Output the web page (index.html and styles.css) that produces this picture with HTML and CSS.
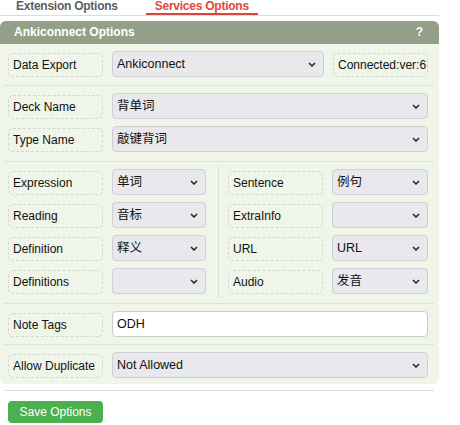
FILE: index.html
```html
<!DOCTYPE html>
<html>
<head>
<meta charset="utf-8">
<link rel="stylesheet" href="styles.css">
</head>
<body>
<div class="page">
  <div class="tabs">
    <span class="tab">Extension Options</span>
    <span class="tab active">Services Options</span>
  </div>

  <div class="panel">
    <div class="panel-head"><span>Ankiconnect Options</span><span>?</span></div>

    <div class="sec s1">
      <div class="row">
        <div class="lbl">Data Export</div>
        <div class="sel">
          <select><option>Ankiconnect</option></select>
          <svg class="chev" width="8" height="5" viewBox="0 0 8 5"><path d="M1 1 L4 4 L7 1" fill="none" stroke="#222" stroke-width="1.5"/></svg>
        </div>
        <div class="lbl status">Connected:ver:6</div>
      </div>
    </div>

    <div class="sec s2">
      <div class="row">
        <div class="lbl">Deck Name</div>
        <div class="sel">
          <select><option>背单词</option></select>
          <svg class="chev" width="8" height="5" viewBox="0 0 8 5"><path d="M1 1 L4 4 L7 1" fill="none" stroke="#222" stroke-width="1.5"/></svg>
        </div>
      </div>
      <div class="row">
        <div class="lbl">Type Name</div>
        <div class="sel">
          <select><option>敲键背词</option></select>
          <svg class="chev" width="8" height="5" viewBox="0 0 8 5"><path d="M1 1 L4 4 L7 1" fill="none" stroke="#222" stroke-width="1.5"/></svg>
        </div>
      </div>
    </div>

    <div class="sec s3">
      <div class="cols">
        <div class="col left">
          <div class="row">
            <div class="lbl">Expression</div>
            <div class="sel">
              <select><option>单词</option></select>
              <svg class="chev" width="8" height="5" viewBox="0 0 8 5"><path d="M1 1 L4 4 L7 1" fill="none" stroke="#222" stroke-width="1.5"/></svg>
            </div>
          </div>
          <div class="row">
            <div class="lbl">Reading</div>
            <div class="sel">
              <select><option>音标</option></select>
              <svg class="chev" width="8" height="5" viewBox="0 0 8 5"><path d="M1 1 L4 4 L7 1" fill="none" stroke="#222" stroke-width="1.5"/></svg>
            </div>
          </div>
          <div class="row">
            <div class="lbl">Definition</div>
            <div class="sel">
              <select><option>释义</option></select>
              <svg class="chev" width="8" height="5" viewBox="0 0 8 5"><path d="M1 1 L4 4 L7 1" fill="none" stroke="#222" stroke-width="1.5"/></svg>
            </div>
          </div>
          <div class="row">
            <div class="lbl">Definitions</div>
            <div class="sel">
              <select><option></option></select>
              <svg class="chev" width="8" height="5" viewBox="0 0 8 5"><path d="M1 1 L4 4 L7 1" fill="none" stroke="#222" stroke-width="1.5"/></svg>
            </div>
          </div>
        </div>
        <div class="col right">
          <div class="row">
            <div class="lbl">Sentence</div>
            <div class="sel">
              <select><option>例句</option></select>
              <svg class="chev" width="8" height="5" viewBox="0 0 8 5"><path d="M1 1 L4 4 L7 1" fill="none" stroke="#222" stroke-width="1.5"/></svg>
            </div>
          </div>
          <div class="row">
            <div class="lbl">ExtraInfo</div>
            <div class="sel">
              <select><option></option></select>
              <svg class="chev" width="8" height="5" viewBox="0 0 8 5"><path d="M1 1 L4 4 L7 1" fill="none" stroke="#222" stroke-width="1.5"/></svg>
            </div>
          </div>
          <div class="row">
            <div class="lbl">URL</div>
            <div class="sel">
              <select><option>URL</option></select>
              <svg class="chev" width="8" height="5" viewBox="0 0 8 5"><path d="M1 1 L4 4 L7 1" fill="none" stroke="#222" stroke-width="1.5"/></svg>
            </div>
          </div>
          <div class="row">
            <div class="lbl">Audio</div>
            <div class="sel">
              <select><option>发音</option></select>
              <svg class="chev" width="8" height="5" viewBox="0 0 8 5"><path d="M1 1 L4 4 L7 1" fill="none" stroke="#222" stroke-width="1.5"/></svg>
            </div>
          </div>
        </div>
      </div>
    </div>

    <div class="sec s4">
      <div class="row">
        <div class="lbl">Note Tags</div>
        <input class="txt" type="text" value="ODH">
      </div>
    </div>

    <div class="sec s5">
      <div class="row">
        <div class="lbl">Allow Duplicate</div>
        <div class="sel">
          <select><option>Not Allowed</option></select>
          <svg class="chev" width="8" height="5" viewBox="0 0 8 5"><path d="M1 1 L4 4 L7 1" fill="none" stroke="#222" stroke-width="1.5"/></svg>
        </div>
      </div>
    </div>
  </div>

  <div class="rule"></div>
  <button class="save">Save Options</button>
</div>
</body>
</html>
```

FILE: styles.css
```css
* { box-sizing: border-box; }
html, body { margin: 0; padding: 0; background: #fff; }
body {
  font-family: "Liberation Sans", Arial, "Noto Sans CJK SC", sans-serif;
  font-size: 12px;
  color: #111;
}
.page { width: 439px; }

.tabs {
  display: flex;
  gap: 19px;
  padding-left: 7px;
  border-bottom: 1px solid #dcdcdc;
}
.tab {
  padding: 0 9px;
  line-height: 13px;
  font-weight: bold;
  letter-spacing: -0.25px;
  color: #5e5e5e;
  border-bottom: 2px solid transparent;
  white-space: nowrap;
}
.tab.active {
  color: #e2473a;
  border-bottom-color: #d9463a;
}

.panel {
  margin-top: 5px;
  background: #f0f5e9;
  border-radius: 6px;
  padding-bottom: 6px;
}
.panel-head {
  height: 23px;
  line-height: 23px;
  background: #939f87;
  color: #fff;
  font-weight: bold;
  border-radius: 6px 6px 0 0;
  padding: 0 16px 0 14px;
  display: flex;
  justify-content: space-between;
}

.sec {
  margin: 0 5px 0 4px;
  padding: 7px 6px 7px 4px;
  border-bottom: 1px solid #dce2d6;
  display: flex;
  flex-direction: column;
  gap: 7px;
}
.s1 { padding-bottom: 8px; }
.s2 { padding-bottom: 9px; }
.s3 { padding-top: 4px; padding-bottom: 5px; }
.s5 { border-bottom: none; padding-bottom: 0; }

.row {
  display: flex;
  align-items: flex-end;
  gap: 9px;
  height: 26px;
}
.lbl {
  flex: 0 0 95px;
  width: 95px;
  height: 24px;
  border: 1px dashed #d2d6ce;
  border-radius: 5px;
  padding: 0 4px;
  display: flex;
  align-items: center;
  white-space: nowrap;
  color: #111;
}

.sel {
  flex: 1;
  min-width: 0;
  display: grid;
  height: 26px;
  align-self: flex-start;
}
.sel select {
  grid-area: 1 / 1;
  appearance: none;
  -webkit-appearance: none;
  width: 100%;
  height: 26px;
  margin: 0;
  padding: 0 20px 0 4px;
  background: #e9e8ed;
  border: 1px solid #cfcfd5;
  border-radius: 4px;
  font-family: "Liberation Sans", Arial, "Noto Sans CJK SC", sans-serif;
  font-size: 12.5px;
  color: #111;
  outline: none;
}
.chev {
  grid-area: 1 / 1;
  justify-self: end;
  align-self: center;
  margin-right: 8px;
  pointer-events: none;
}

.cols { display: flex; }
.col {
  display: flex;
  flex-direction: column;
  gap: 7px;
  padding: 3px 0 4px;
}
.col.left { flex: 0 0 210px; padding-right: 12px; }
.col.right { flex: 1; border-left: 1px solid #dadfd5; padding-left: 9px; }

.txt {
  flex: 1;
  min-width: 0;
  align-self: flex-start;
  height: 26px;
  margin: 0;
  padding: 0 4px;
  background: #fff;
  border: 1px solid #cccccc;
  border-radius: 4px;
  font-family: "Liberation Sans", Arial, sans-serif;
  font-size: 12.5px;
  color: #111;
  outline: none;
}

.rule {
  margin: 6px 5px 0 4px;
  border-top: 1px solid #dedede;
}
.save {
  display: block;
  margin: 10px 0 0 8px;
  width: 95px;
  height: 22px;
  padding: 0;
  border: none;
  border-radius: 4px;
  background: #4caf50;
  color: #fff;
  font-family: "Liberation Sans", Arial, sans-serif;
  font-size: 12px;
}
```
